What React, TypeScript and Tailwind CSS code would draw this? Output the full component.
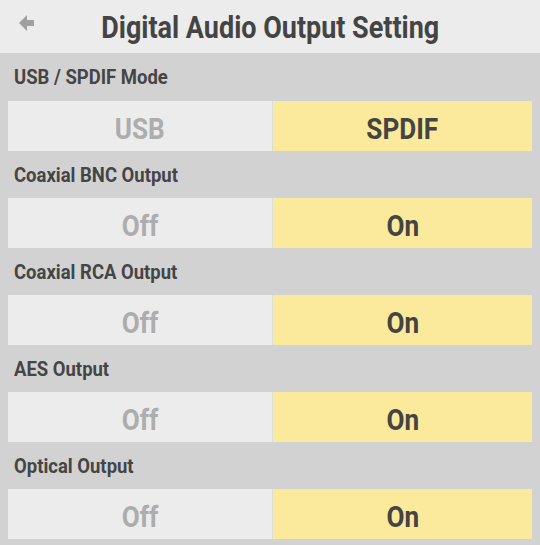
import React from "react";

const font = { fontFamily: '"Roboto", "Liberation Sans", sans-serif' };

function Row({ label, left, right, first }: { label: string; left: string; right: string; first?: boolean }) {
  return (
    <div className="flex flex-col">
      <div className={`${first ? "h-[48px]" : "h-[47px]"} flex items-center px-[14px] pt-[2px] text-[21px] font-bold text-[#454545]`}>
        <span className="inline-block origin-left scale-x-[0.88] whitespace-nowrap">{label}</span>
      </div>
      <div className="mx-[8px] flex h-[50px] gap-px bg-[#dcdcdc]">
        <div className="flex w-[264px] items-center justify-center bg-[#ececec] pt-[4px] text-[30px] font-bold text-[#adadad]">
          <span className="inline-block scale-x-[0.87]">{left}</span>
        </div>
        <div className="flex flex-1 items-center justify-center bg-[#fbea9b] pt-[4px] text-[30px] font-bold text-[#444444]">
          <span className="inline-block scale-x-[0.87]">{right}</span>
        </div>
      </div>
    </div>
  );
}

export default function App() {
  return (
    <div className="flex h-[545px] w-[540px] flex-col bg-[#d2d2d2]" style={font}>
      <div className="relative flex h-[53px] items-center justify-center bg-[#ececec] pt-[4px]">
        <svg className="absolute left-[19px] top-[15px]" width="16" height="16" viewBox="0 0 16 16">
          <path d="M0 8 L8 0 L8 5 L15 5 L15 11 L8 11 L8 16 Z" fill="#a0a0a0" />
        </svg>
        <span className="inline-block scale-x-[0.87] whitespace-nowrap text-[31px] font-bold text-[#444444]">
          Digital Audio Output Setting
        </span>
      </div>
      <Row first label="USB / SPDIF Mode" left="USB" right="SPDIF" />
      <Row label="Coaxial BNC Output" left="Off" right="On" />
      <Row label="Coaxial RCA Output" left="Off" right="On" />
      <Row label="AES Output" left="Off" right="On" />
      <Row label="Optical Output" left="Off" right="On" />
    </div>
  );
}
